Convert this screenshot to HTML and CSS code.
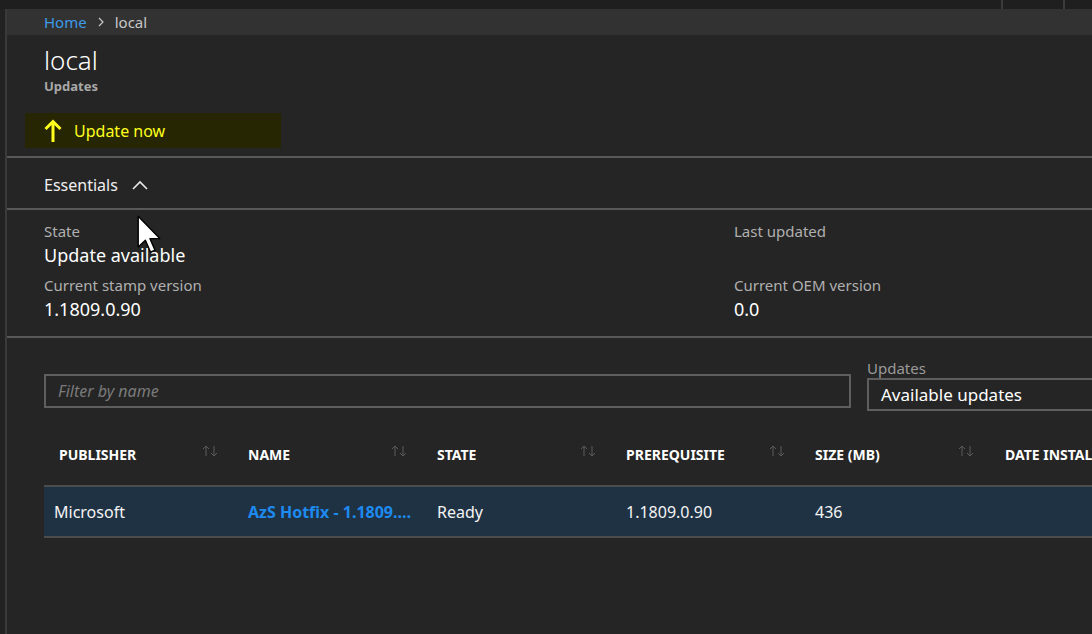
FILE: index.html
```html
<!DOCTYPE html>
<html>
<head>
<meta charset="utf-8">
<link rel="stylesheet" href="styles.css">
</head>
<body>
<div class="topstrip">
  <div class="seg seg-main"></div>
  <div class="seg seg-a"></div>
  <div class="seg seg-b"></div>
</div>
<div class="frame">
  <div class="rail"></div>
  <main class="blade">
    <nav class="crumbs">
      <a class="crumb-link">Home</a>
      <span class="crumb-sep">
        <svg width="8" height="10" viewBox="0 0 8 10"><path d="M2 1 L6 5 L2 9" fill="none" stroke="#c8c8c8" stroke-width="1.2"/></svg>
      </span>
      <span class="crumb-cur">local</span>
    </nav>
    <header class="head">
      <h1 class="title">local</h1>
      <div class="subtitle">Updates</div>
    </header>
    <div class="toolbar">
      <button class="cmd">
        <svg class="cmd-icon" width="18" height="24" viewBox="0 0 18 24"><path d="M9 3 V23 M1.5 10 L9 2.5 L16.5 10" fill="none" stroke="#ffff1e" stroke-width="3"/></svg>
        <span>Update now</span>
      </button>
    </div>
    <div class="rule"></div>
    <div class="ess-head">
      <span>Essentials</span>
      <svg width="16" height="10" viewBox="0 0 16 10"><path d="M1 9 L8 2 L15 9" fill="none" stroke="#e8e8e8" stroke-width="1.6"/></svg>
    </div>
    <div class="rule"></div>
    <section class="ess">
      <div class="ess-col">
        <div class="prop">
          <div class="prop-label">State</div>
          <div class="prop-value">Update available</div>
        </div>
        <div class="prop">
          <div class="prop-label">Current stamp version</div>
          <div class="prop-value">1.1809.0.90</div>
        </div>
      </div>
      <div class="ess-col ess-right">
        <div class="prop">
          <div class="prop-label">Last updated</div>
          <div class="prop-value"></div>
        </div>
        <div class="prop">
          <div class="prop-label">Current OEM version</div>
          <div class="prop-value">0.0</div>
        </div>
      </div>
    </section>
    <div class="rule"></div>
    <section class="filters">
      <div class="filter-box"><span class="placeholder">Filter by name</span></div>
      <div class="select-wrap">
        <div class="select-label">Updates</div>
        <div class="select-box">Available updates</div>
      </div>
    </section>
    <section class="grid">
      <div class="grid-head">
        <div class="th"><span>PUBLISHER</span><svg class="sort" width="17" height="12" viewBox="0 0 17 12"><path d="M4 11 V1 M1 4 L4 1 L7 4 M12 1 V11 M9 8 L12 11 L15 8" fill="none" stroke="#5c5c5c" stroke-width="1"/></svg></div>
        <div class="th"><span>NAME</span><svg class="sort" width="17" height="12" viewBox="0 0 17 12"><path d="M4 11 V1 M1 4 L4 1 L7 4 M12 1 V11 M9 8 L12 11 L15 8" fill="none" stroke="#5c5c5c" stroke-width="1"/></svg></div>
        <div class="th"><span>STATE</span><svg class="sort" width="17" height="12" viewBox="0 0 17 12"><path d="M4 11 V1 M1 4 L4 1 L7 4 M12 1 V11 M9 8 L12 11 L15 8" fill="none" stroke="#5c5c5c" stroke-width="1"/></svg></div>
        <div class="th"><span>PREREQUISITE</span><svg class="sort" width="17" height="12" viewBox="0 0 17 12"><path d="M4 11 V1 M1 4 L4 1 L7 4 M12 1 V11 M9 8 L12 11 L15 8" fill="none" stroke="#5c5c5c" stroke-width="1"/></svg></div>
        <div class="th"><span>SIZE (MB)</span><svg class="sort" width="17" height="12" viewBox="0 0 17 12"><path d="M4 11 V1 M1 4 L4 1 L7 4 M12 1 V11 M9 8 L12 11 L15 8" fill="none" stroke="#5c5c5c" stroke-width="1"/></svg></div>
        <div class="th th-last"><span>DATE INSTALLED</span></div>
      </div>
      <div class="grid-row">
        <div class="td td-first">Microsoft</div>
        <div class="td td-link">AzS Hotfix - 1.1809.0.90</div>
        <div class="td">Ready</div>
        <div class="td">1.1809.0.90</div>
        <div class="td">436</div>
        <div class="td"></div>
      </div>
    </section>
  </main>
</div>
<svg class="cursor" width="26" height="40" viewBox="0 0 13 20"><path d="M0.6 0.6 L0.6 16 L4.2 12.6 L6.8 18.6 L9 17.6 L6.5 11.8 L11.4 11.8 Z" fill="#ffffff" stroke="#000000" stroke-width="0.7" stroke-linejoin="round"/></svg>
</body>
</html>
```
FILE: styles.css
```css
* { box-sizing: border-box; }
html, body { margin: 0; padding: 0; }
body {
  background: #252525;
  color: #ffffff;
  font-family: "Noto Sans", "Open Sans", sans-serif;
  width: 1092px;
  height: 634px;
  overflow: hidden;
  position: relative;
}
.topstrip {
  height: 9px;
  display: flex;
  background: #1f1f1f;
}
.seg { height: 9px; }
.seg-main { width: 1001px; }
.seg-a { width: 62px; border-left: 2px solid #3c3c3c; }
.seg-b { flex: 1; border-left: 2px solid #3c3c3c; }
.frame {
  display: flex;
  height: 625px;
}
.rail {
  width: 7px;
  flex: none;
  background: #222222;
  border-right: 2px solid #3a3a3a;
}
.blade {
  flex: 1;
  min-width: 0;
  overflow: hidden;
}
.crumbs {
  height: 26px;
  background: #323232;
  padding-left: 37px;
  display: flex;
  align-items: center;
  font-size: 15px;
  gap: 10px;
}
.crumb-link { color: #3d9be9; }
.crumb-sep { display: flex; align-items: center; }
.crumb-cur { color: #c8c8c8; }
.head { padding: 9px 0 0 37px; }
.title {
  margin: 0;
  font-size: 26px;
  font-weight: 300;
  line-height: 32px;
  color: #ffffff;
}
.subtitle {
  font-size: 13px;
  font-weight: 700;
  color: #a8a8a8;
  line-height: 18px;
  margin-top: 1px;
}
.toolbar { padding: 18px 0 8px 18px; }
.cmd {
  width: 256px;
  height: 35px;
  border: 0;
  background: #262602;
  display: flex;
  align-items: center;
  gap: 12px;
  padding: 0 0 0 19px;
  font-family: inherit;
  font-size: 16px;
  color: #ffff1e;
  text-align: left;
}
.rule {
  height: 2px;
  background: #595959;
}
.ess-head {
  height: 50px;
  display: flex;
  align-items: center;
  gap: 14px;
  padding: 3px 0 0 37px;
  font-size: 16px;
  color: #f0f0f0;
}
.ess {
  display: flex;
  padding: 11px 0 15px 37px;
}
.ess-col { width: 690px; flex: none; display: flex; flex-direction: column; gap: 8px; }
.ess-right { width: auto; flex: 1; }
.prop-label {
  font-size: 15px;
  line-height: 20px;
  color: #b0b0b0;
}
.prop-value {
  font-size: 18px;
  line-height: 24px;
  height: 26px;
  padding-top: 2px;
  color: #ffffff;
}
.filters {
  display: flex;
  align-items: flex-end;
  gap: 16px;
  padding: 20px 0 0 37px;
}
.filter-box {
  width: 807px;
  flex: none;
  height: 34px;
  border: 2px solid #5e5e5e;
  display: flex;
  align-items: center;
  padding-left: 12px;
  margin-bottom: 3px;
}
.placeholder {
  font-style: italic;
  font-size: 16px;
  color: #7a7a7a;
}
.select-wrap { width: 260px; flex: none; }
.select-label {
  font-size: 15px;
  line-height: 20px;
  color: #9a9a9a;
}
.select-box {
  height: 33px;
  border: 2px solid #5e5e5e;
  display: flex;
  align-items: center;
  padding-left: 12px;
  font-size: 17px;
  color: #ffffff;
}
.grid {
  margin: 13px 0 0 37px;
  width: 1134px;
}
.grid-head {
  display: grid;
  grid-template-columns: repeat(6, 189px);
  height: 61px;
}
.th {
  display: flex;
  align-items: center;
  justify-content: space-between;
  padding: 0 14px 0 15px;
  font-size: 14px;
  font-weight: 700;
  color: #ffffff;
  white-space: nowrap;
}
.th-last { padding-left: 16px; }
.sort { margin-top: -8px; }
.grid-row {
  display: grid;
  grid-template-columns: repeat(6, 189px);
  height: 53px;
  background: #1f3244;
  border-top: 2px solid #4c4c4c;
  border-bottom: 2px solid #4c4c4c;
}
.td {
  display: flex;
  align-items: center;
  padding: 1px 10px 0 15px;
  font-size: 16px;
  color: #f4f4f4;
  white-space: nowrap;
  overflow: hidden;
}
.td-first { padding-left: 10px; }
.td-link {
  display: block;
  line-height: 49px;
  padding-top: 1px;
  color: #1d8af0;
  font-weight: 700;
  text-overflow: ellipsis;
  padding-right: 4px;
}
.cursor {
  position: absolute;
  left: 137px;
  top: 215px;
}
```
